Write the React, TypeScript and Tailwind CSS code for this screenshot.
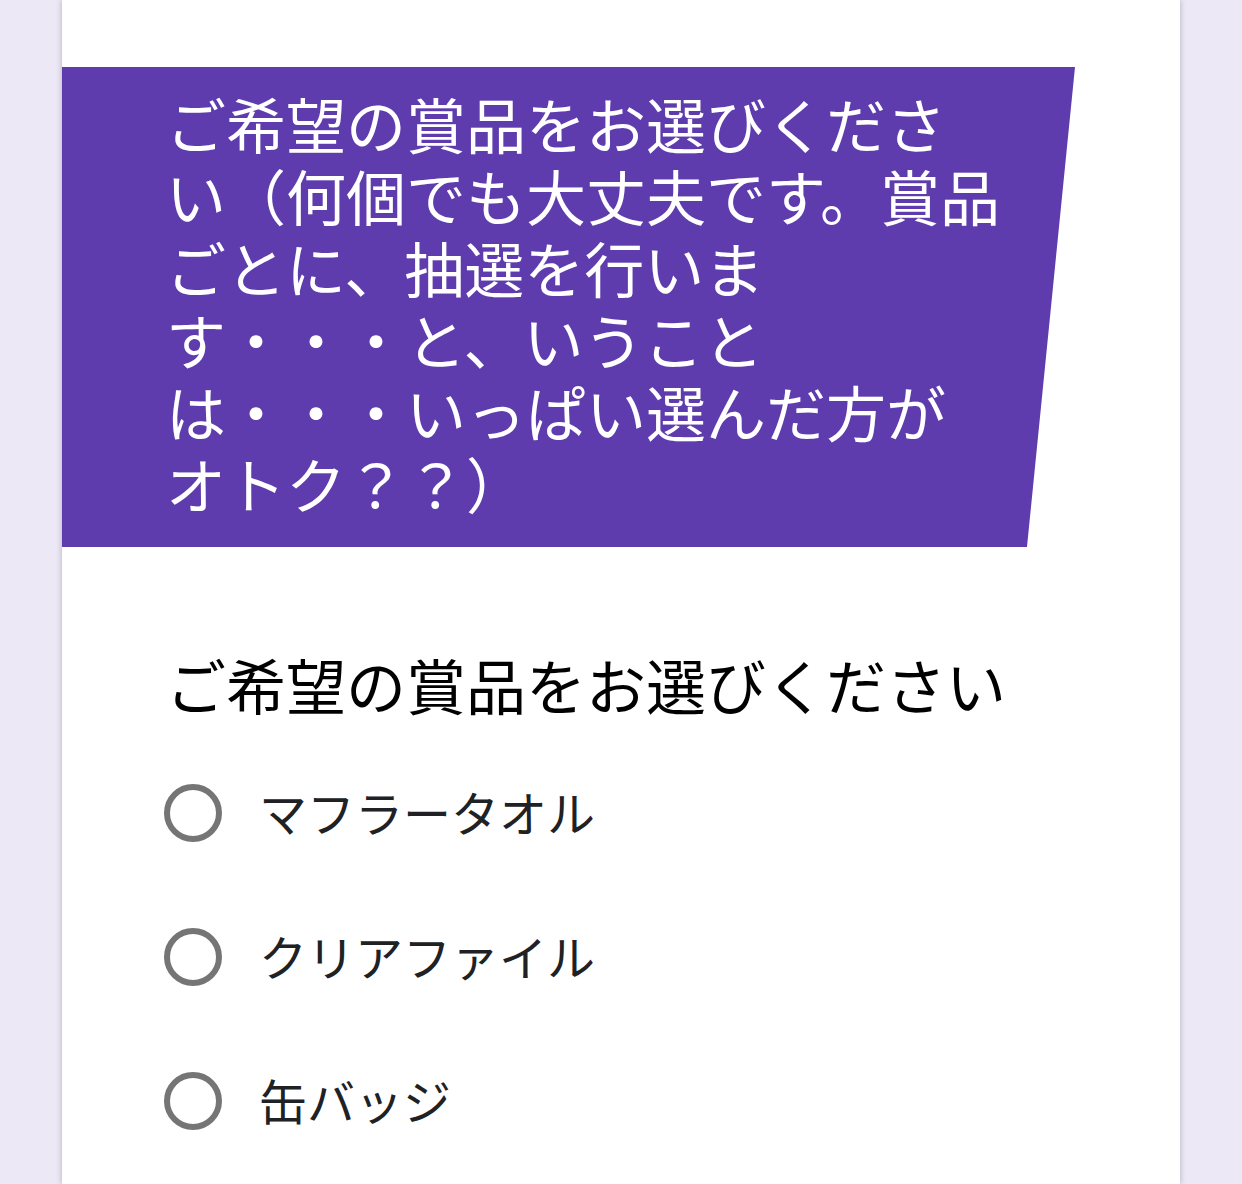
const bannerLines = [
  "ご希望の賞品をお選びくださ",
  "い（何個でも大丈夫です。賞品",
  "ごとに、抽選を行いま",
  "す・・・と、いうこと",
  "は・・・いっぱい選んだ方が",
  "オトク？？）",
];

const options = ["マフラータオル", "クリアファイル", "缶バッジ"];

export default function App() {
  return (
    <div className="min-h-[1184px] w-full bg-[#ece8f6] font-['Noto_Sans_CJK_JP','Noto_Sans',sans-serif] overflow-hidden">
      <div className="ml-[62px] w-[1118px] min-h-[1184px] bg-white shadow-[0_0_6px_rgba(0,0,0,0.25)] pt-[67px]">
        {/* header banner */}
        <div className="w-[1013px] h-[480px] bg-[#5f3cae] [clip-path:polygon(0_0,100%_0,95.26%_100%,0_100%)] pl-[104px] pt-[20px]">
          {bannerLines.map((line) => (
            <div key={line} className="text-white text-[60px] leading-[72px] whitespace-nowrap">
              {line}
            </div>
          ))}
        </div>

        {/* question */}
        <div className="pl-[104px] pt-[101px]">
          <h2 className="text-black text-[60px] leading-[72px] whitespace-nowrap">ご希望の賞品をお選びください</h2>
          <div className="mt-[21px] flex flex-col">
            {options.map((opt) => (
              <label key={opt} className="h-[144px] flex items-center -ml-[2px]">
                <span className="w-[58px] h-[58px] rounded-full border-[6px] border-[#757575] shrink-0" />
                <span className="ml-[37px] -mt-[4px] text-[#202124] text-[48px] leading-[60px] whitespace-nowrap">{opt}</span>
              </label>
            ))}
          </div>
        </div>
      </div>
    </div>
  );
}
